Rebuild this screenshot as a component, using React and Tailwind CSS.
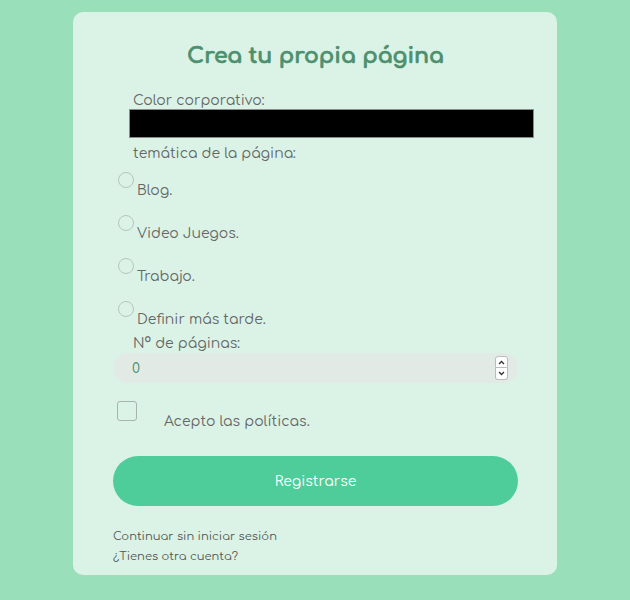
import React from 'react';

const font = { fontFamily: '"Comfortaa", "Noto Sans", sans-serif' };

function Radio({ label }) {
  return (
    <label className="flex items-start h-[43px]">
      <span className="mt-[1px] h-[16px] w-[16px] rounded-full border border-[#b9c4bf] shrink-0"></span>
      <span className="ml-[3px] mt-[11px] text-[14px] leading-[18px] text-[#666]">{label}</span>
    </label>
  );
}

export default function App() {
  return (
    <div className="min-h-[600px] w-full bg-[#99dfba] pt-[12px] pb-[25px]" style={font}>
      <div className="ml-[73px] w-[484px] h-[563px] rounded-[10px] bg-[#daf3e6] pl-[40px] pr-[39px]">
        {/* Title */}
        <h1 className="pt-[29px] text-center text-[22px] leading-[30px] font-bold text-[#4d8f6e] [-webkit-text-stroke:0.7px_#4d8f6e]">
          Crea tu propia página
        </h1>

        <div className="mt-[21px] pl-[20px] text-[14px] leading-[17px] text-[#666]">Color corporativo:</div>
        <div className="ml-[16px] h-[29px] w-[405px] border border-[#8a8a8a] bg-black"></div>

        <div className="mt-[7px] pl-[20px] text-[14px] leading-[18px] text-[#666]">temática de la página:</div>

        <div className="mt-[8px] pl-[5px] flex flex-col">
          <Radio label="Blog." />
          <Radio label="Video Juegos." />
          <Radio label="Trabajo." />
          <Radio label="Definir más tarde." />
        </div>

        <div className="-mt-[8px] pl-[20px] text-[14px] leading-[18px] text-[#666]">N° de páginas:</div>
        <div className="flex h-[30px] w-[405px] items-center rounded-full bg-[#e2eae6] pl-[19px] pr-[10px]">
          <span className="flex-1 text-[14px] text-[#4d8f6e]">0</span>
          <div className="flex flex-col">
            <span className="flex h-[12px] w-[13px] items-center justify-center rounded-t-[3px] border border-[#bbb] bg-white">
              <svg width="7" height="5" viewBox="0 0 7 5"><path d="M1 4 L3.5 1.5 L6 4" stroke="#333" strokeWidth="1.3" fill="none" /></svg>
            </span>
            <span className="flex h-[12px] w-[13px] items-center justify-center rounded-b-[3px] border border-t-0 border-[#bbb] bg-white">
              <svg width="7" height="5" viewBox="0 0 7 5"><path d="M1 1 L3.5 3.5 L6 1" stroke="#333" strokeWidth="1.3" fill="none" /></svg>
            </span>
          </div>
        </div>

        <div className="mt-[18px] flex items-start pl-[4px]">
          <span className="h-[20px] w-[20px] rounded-[3px] border border-[#a9b3ae] shrink-0"></span>
          <span className="ml-[27px] mt-[12px] text-[14px] leading-[18px] text-[#666]">Acepto las políticas.</span>
        </div>

        <button className="mt-[25px] h-[50px] w-[405px] rounded-full bg-[#4ecd9a] text-[14px] text-white">
          Registrarse
        </button>

        <div className="mt-[21px] text-[11.5px] leading-[20px] text-[#555]">
          <div>Continuar sin iniciar sesión</div>
          <div>¿Tienes otra cuenta?</div>
        </div>
      </div>
    </div>
  );
}
